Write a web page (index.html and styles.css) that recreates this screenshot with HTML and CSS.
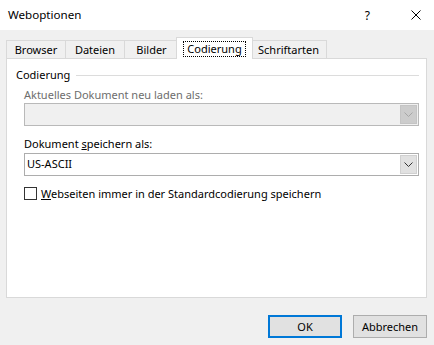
FILE: index.html
```html
<!DOCTYPE html>
<html lang="de">
<head>
    <meta charset="UTF-8">
    <meta name="viewport" content="width=device-width, initial-scale=1.0">
    <title>Weboptionen</title>
    <link rel="stylesheet" href="styles.css">
</head>
<body>
    <div class="dialog">
        <div class="titlebar">
            <span class="title">Weboptionen</span>
            <span class="help">?</span>
            <svg class="close" width="10" height="10" viewBox="0 0 10 10">
                <path d="M0.5 0.5 L9.5 9.5 M9.5 0.5 L0.5 9.5" stroke="#000" stroke-width="1" fill="none"/>
            </svg>
        </div>

        <div class="tabs">
            <div class="tab tab-browser">Browser</div>
            <div class="tab tab-dateien">Dateien</div>
            <div class="tab tab-bilder">Bilder</div>
            <div class="tab tab-active"><span class="focus">Codierung</span></div>
            <div class="tab tab-schrift">Schriftarten</div>
        </div>

        <div class="panel">
            <div class="group-head">
                <span>Codierung</span>
                <span class="group-line"></span>
            </div>

            <div class="field">
                <div class="label disabled">Aktuelles Dokument neu laden als:</div>
                <div class="select select-disabled">
                    <span class="value"></span>
                    <span class="arrow">
                        <svg width="9" height="5" viewBox="0 0 9 5"><path d="M0.5 0.5 L4.5 4.5 L8.5 0.5" stroke="#a6a6a6" fill="none"/></svg>
                    </span>
                </div>
            </div>

            <div class="field">
                <div class="label">Dokument <u>s</u>peichern als:</div>
                <div class="select">
                    <span class="value">US-ASCII</span>
                    <span class="arrow">
                        <svg width="9" height="5" viewBox="0 0 9 5"><path d="M0.5 0.5 L4.5 4.5 L8.5 0.5" stroke="#333" fill="none"/></svg>
                    </span>
                </div>
            </div>

            <div class="check-row">
                <span class="checkbox"></span>
                <span><u>W</u>ebseiten immer in der Standardcodierung speichern</span>
            </div>
        </div>

        <div class="buttons">
            <button class="btn btn-default">OK</button>
            <button class="btn">Abbrechen</button>
        </div>
    </div>
</body>
</html>
```

FILE: styles.css
```css
body {
    margin: 0;
    font-family: "Segoe UI", "Noto Sans", sans-serif;
    font-size: 11px;
    color: #000;
    background: #f0f0f0;
}
.dialog {
    width: 434px;
    height: 345px;
    overflow: hidden;
}
.titlebar {
    height: 30px;
    background: #fff;
    display: flex;
    align-items: center;
    padding-left: 8px;
}
.title {
    flex: 1;
    margin-top: -1px;
    font-size: 11.6px;
}
.help {
    margin-right: 41px;
    font-size: 12px;
}
.close {
    margin-right: 13px;
}
.tabs {
    display: flex;
    align-items: flex-end;
    height: 21px;
    margin-top: 7px;
    padding-left: 6px;
}
.tab {
    box-sizing: border-box;
    height: 18px;
    border: 1px solid #d9d9d9;
    border-bottom: none;
    margin-right: -1px;
    text-align: center;
    line-height: 16px;
    padding-top: 1px;
}
.tab-browser { width: 60px; }
.tab-dateien { width: 60px; }
.tab-bilder { width: 55px; }
.tab-schrift { width: 77px; }
.tab-active {
    position: relative;
    z-index: 1;
    width: 77px;
    height: 22px;
    margin-left: -2px;
    margin-right: -3px;
    margin-bottom: -1px;
    background: #fff;
    padding-top: 3px;
}
.focus {
    display: inline-block;
    border: 1px dotted #000;
    padding: 0 3px;
    line-height: 14px;
}
.panel {
    box-sizing: border-box;
    width: 421px;
    height: 240px;
    margin-left: 6px;
    background: #fff;
    border: 1px solid #d9d9d9;
    padding: 8px 7px 0 9px;
}
.group-head {
    display: flex;
    align-items: center;
    line-height: 16px;
}
.group-line {
    flex: 1;
    margin-left: 6px;
    border-top: 1px solid #dcdcdc;
}
.field {
    margin-left: 8px;
}
.label {
    line-height: 16px;
    margin-top: 4px;
}
.field + .field .label {
    margin-top: 10px;
    margin-bottom: 1px;
}
.disabled {
    color: #6d6d6d;
}
.select {
    box-sizing: border-box;
    height: 23px;
    border: 1px solid #adadad;
    display: flex;
    background: #fff;
}
.select-disabled {
    border-color: #b9b9b9;
    background: #f0f0f0;
}
.value {
    flex: 1;
    padding-left: 2px;
    line-height: 20px;
}
.arrow {
    box-sizing: border-box;
    width: 17px;
    margin: 1px;
    display: flex;
    align-items: center;
    justify-content: center;
    background: #e1e1e1;
    border: 1px solid #d0d0d0;
}
.select-disabled .arrow {
    background: #cccccc;
    border-color: #c4c4c4;
}
.check-row {
    display: flex;
    align-items: center;
    margin-top: 10px;
    margin-left: 8px;
}
.checkbox {
    box-sizing: border-box;
    width: 13px;
    height: 13px;
    border: 1px solid #333;
    margin-right: 4px;
}
.buttons {
    display: flex;
    justify-content: flex-end;
    gap: 11px;
    margin-top: 17px;
    padding-right: 7px;
}
.btn {
    box-sizing: border-box;
    width: 74px;
    height: 23px;
    font-family: inherit;
    font-size: 11px;
    color: #000;
    background: #e1e1e1;
    border: 1px solid #adadad;
    padding: 0;
}
.btn-default {
    border: 2px solid #0078d7;
}
```
